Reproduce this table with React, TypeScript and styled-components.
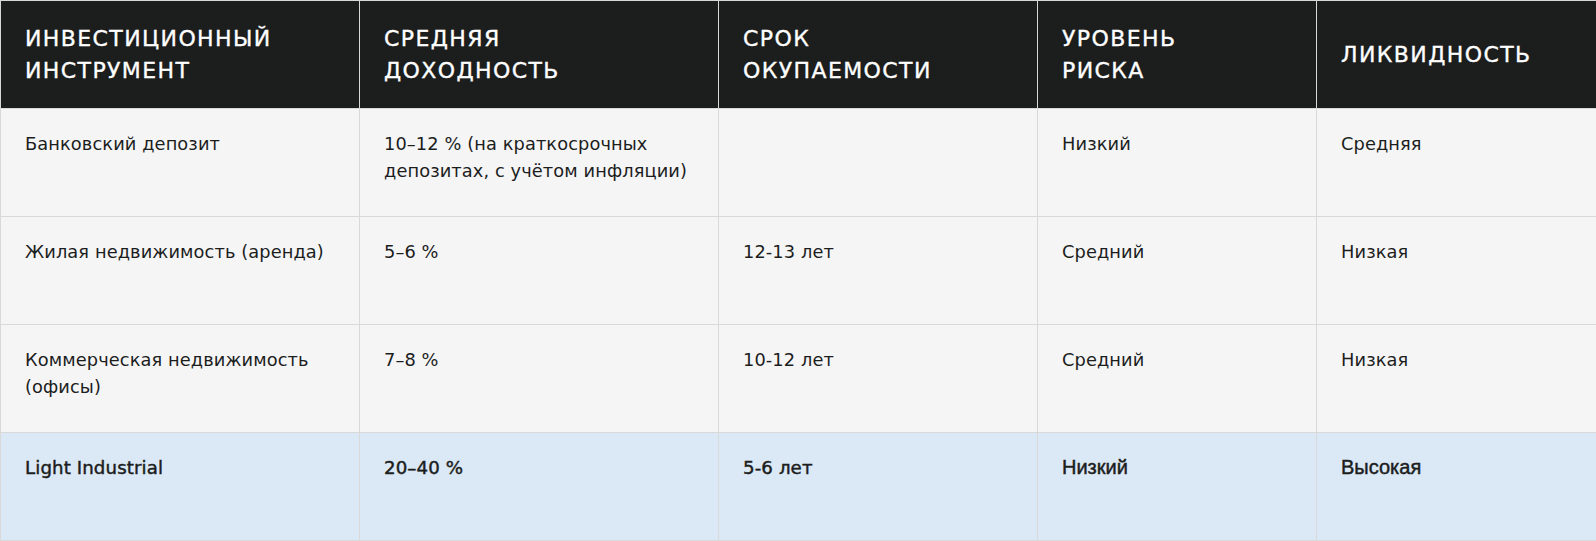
import React from 'react';
import styled, { createGlobalStyle } from 'styled-components';

const GlobalStyle = createGlobalStyle`
  html, body {
    margin: 0;
    padding: 0;
    background: #ffffff;
  }
`;

const Table = styled.table`
  width: 1596px;
  border-collapse: collapse;
  table-layout: fixed;
  font-family: 'DejaVu Sans', 'Noto Sans', sans-serif;
  color: #1c1d1d;
`;

const HeadCell = styled.th`
  height: 108px;
  box-sizing: border-box;
  padding: 0 24px;
  background: #1c1d1d;
  color: #ffffff;
  border: 1px solid #d9d9d9;
  text-align: left;
  vertical-align: middle;
  font-size: 22px;
  font-weight: 400;
  line-height: 32px;
  letter-spacing: 1.4px;
  text-transform: uppercase;
  -webkit-text-stroke: 0.35px #ffffff;
`;

const Row = styled.tr<{ $accent?: boolean }>`
  background: ${(p) => (p.$accent ? '#dbe9f6' : '#f5f5f5')};
`;

const Cell = styled.td<{ $strong?: boolean; $plain?: boolean }>`
  height: 108px;
  box-sizing: border-box;
  padding: 21px 24px 0;
  border: 1px solid #d9d9d9;
  vertical-align: top;
  font-family: ${(p) => (p.$plain ? "'Liberation Sans', Arial, sans-serif" : "'DejaVu Sans', 'Noto Sans', sans-serif")};
  font-size: ${(p) => (p.$plain ? '20px' : p.$strong ? '18.2px' : '17.8px')};
  font-weight: 400;
  line-height: 27px;
  letter-spacing: ${(p) => (p.$plain ? '0' : '0.1px')};
  -webkit-text-stroke: ${(p) => (p.$strong ? '0.45px #1c1d1d' : '0')};
`;

const columns = ['359px', '359px', '319px', '279px', '280px'];

const headers = [
  ['Инвестиционный', 'инструмент'],
  ['Средняя', 'доходность'],
  ['Срок', 'окупаемости'],
  ['Уровень', 'риска'],
  ['Ликвидность'],
];

const rows = [
  ['Банковский депозит', '10–12 % (на краткосрочных депозитах, с учётом инфляции)', '', 'Низкий', 'Средняя'],
  ['Жилая недвижимость (аренда)', '5–6 %', '12-13 лет', 'Средний', 'Низкая'],
  ['Коммерческая недвижимость (офисы)', '7–8 %', '10-12 лет', 'Средний', 'Низкая'],
];

const highlight = ['Light Industrial', '20–40 %', '5-6 лет', 'Низкий', 'Высокая'];

const App = () => {
  return (
    <>
      <GlobalStyle />
      <Table>
        <colgroup>
          {columns.map((w, i) => (
            <col key={i} style={{ width: w }} />
          ))}
        </colgroup>
        <thead>
          <tr>
            {headers.map((lines, i) => (
              <HeadCell key={i}>
                {lines.map((l, j) => (
                  <React.Fragment key={j}>
                    {j > 0 && <br />}
                    {l}
                  </React.Fragment>
                ))}
              </HeadCell>
            ))}
          </tr>
        </thead>
        <tbody>
          {rows.map((r, i) => (
            <Row key={i}>
              {r.map((c, j) => (
                <Cell key={j}>{c}</Cell>
              ))}
            </Row>
          ))}
          <Row $accent>
            {highlight.map((c, j) => (
              <Cell key={j} $strong $plain={j >= 3}>
                {c}
              </Cell>
            ))}
          </Row>
        </tbody>
      </Table>
    </>
  );
};

export default App;
